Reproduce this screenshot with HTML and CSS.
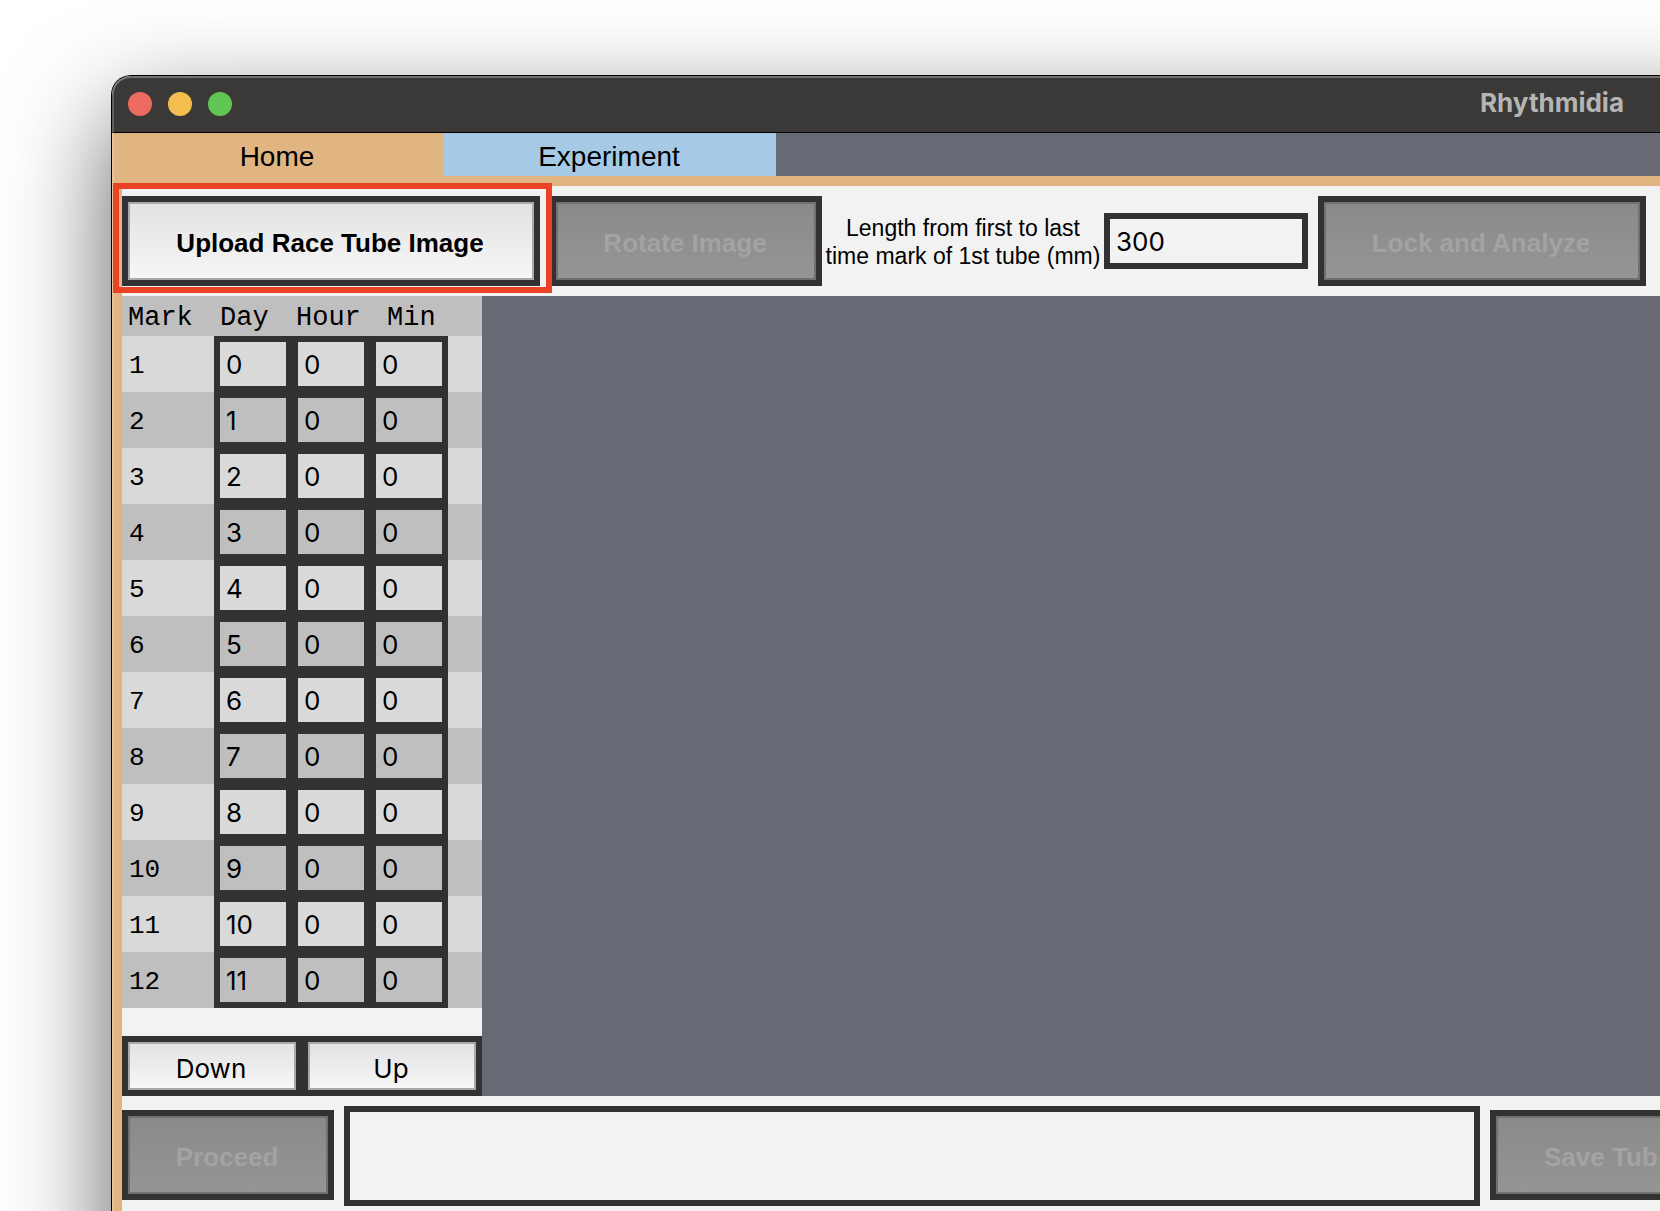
FILE: index.html
```html
<!DOCTYPE html>
<html lang="en">
<head>
<meta charset="utf-8">
<title>Rhythmidia</title>
<link rel="stylesheet" href="styles.css">
</head>
<body>
<div class="desktop">
  <div class="window">
    <header class="titlebar">
      <div class="lights">
        <span class="light light-close"></span>
        <span class="light light-minimize"></span>
        <span class="light light-zoom"></span>
      </div>
      <h1 class="title">Rhythmidia</h1>
    </header>
    <nav class="tabs">
      <button class="tab tab-active" type="button">Home</button>
      <button class="tab" type="button">Experiment</button>
    </nav>
    <main class="page">
      <section class="toolbar">
        <div class="callout"><button class="btn btn-upload" type="button">Upload Race Tube Image</button></div>
        <button class="btn btn-rotate" type="button" disabled>Rotate Image</button>
        <label class="length-label" for="length">Length from first to last<br>time mark of 1st tube (mm)</label>
        <input class="field length-field" id="length" type="text" value="300">
        <button class="btn btn-lock" type="button" disabled>Lock and Analyze</button>
      </section>
      <section class="workspace">
        <div class="side">
          <table class="marks">
            <thead>
              <tr><th class="col-mark">Mark</th><th class="col-time">Day</th><th class="col-time col-hour">Hour</th><th class="col-time col-min">Min</th><th></th></tr>
            </thead>
            <tbody>
              <tr><td>1</td><td><input class="field" aria-label="Mark 1 day" value="0"></td><td><input class="field" aria-label="Mark 1 hour" value="0"></td><td><input class="field" aria-label="Mark 1 minute" value="0"></td><td></td></tr>
              <tr><td>2</td><td><input class="field" aria-label="Mark 2 day" value="1"></td><td><input class="field" aria-label="Mark 2 hour" value="0"></td><td><input class="field" aria-label="Mark 2 minute" value="0"></td><td></td></tr>
              <tr><td>3</td><td><input class="field" aria-label="Mark 3 day" value="2"></td><td><input class="field" aria-label="Mark 3 hour" value="0"></td><td><input class="field" aria-label="Mark 3 minute" value="0"></td><td></td></tr>
              <tr><td>4</td><td><input class="field" aria-label="Mark 4 day" value="3"></td><td><input class="field" aria-label="Mark 4 hour" value="0"></td><td><input class="field" aria-label="Mark 4 minute" value="0"></td><td></td></tr>
              <tr><td>5</td><td><input class="field" aria-label="Mark 5 day" value="4"></td><td><input class="field" aria-label="Mark 5 hour" value="0"></td><td><input class="field" aria-label="Mark 5 minute" value="0"></td><td></td></tr>
              <tr><td>6</td><td><input class="field" aria-label="Mark 6 day" value="5"></td><td><input class="field" aria-label="Mark 6 hour" value="0"></td><td><input class="field" aria-label="Mark 6 minute" value="0"></td><td></td></tr>
              <tr><td>7</td><td><input class="field" aria-label="Mark 7 day" value="6"></td><td><input class="field" aria-label="Mark 7 hour" value="0"></td><td><input class="field" aria-label="Mark 7 minute" value="0"></td><td></td></tr>
              <tr><td>8</td><td><input class="field" aria-label="Mark 8 day" value="7"></td><td><input class="field" aria-label="Mark 8 hour" value="0"></td><td><input class="field" aria-label="Mark 8 minute" value="0"></td><td></td></tr>
              <tr><td>9</td><td><input class="field" aria-label="Mark 9 day" value="8"></td><td><input class="field" aria-label="Mark 9 hour" value="0"></td><td><input class="field" aria-label="Mark 9 minute" value="0"></td><td></td></tr>
              <tr><td>10</td><td><input class="field" aria-label="Mark 10 day" value="9"></td><td><input class="field" aria-label="Mark 10 hour" value="0"></td><td><input class="field" aria-label="Mark 10 minute" value="0"></td><td></td></tr>
              <tr><td>11</td><td><input class="field" aria-label="Mark 11 day" value="10"></td><td><input class="field" aria-label="Mark 11 hour" value="0"></td><td><input class="field" aria-label="Mark 11 minute" value="0"></td><td></td></tr>
              <tr><td>12</td><td><input class="field" aria-label="Mark 12 day" value="11"></td><td><input class="field" aria-label="Mark 12 hour" value="0"></td><td><input class="field" aria-label="Mark 12 minute" value="0"></td><td></td></tr>
            </tbody>
          </table>
          <div class="pager">
            <button class="btn btn-page" type="button">Down</button>
            <button class="btn btn-page" type="button">Up</button>
          </div>
        </div>
        <div class="plot"></div>
      </section>
      <footer class="bottombar">
        <button class="btn btn-proceed" type="button" disabled>Proceed</button>
        <textarea class="field console" aria-label="Messages" readonly></textarea>
        <button class="btn btn-save" type="button" disabled>Save Tub</button>
      </footer>
    </main>
  </div>
</div>
</body>
</html>
```
FILE: styles.css
```css
:root {
  --dark: #323232;
  --panel: #f2f2f2;
  --slate: #676975;
  --orange: #e0b582;
  --sans: "Liberation Sans", Arial, sans-serif;
  --ui: Inter, sans-serif;
  --mono: "Liberation Mono", "Courier New", monospace;
}

* { box-sizing: border-box; }

body { margin: 0; background: #fff; }

.desktop {
  display: flex;
  min-height: 100vh;
  padding: 75px 0 0 111px;
  overflow: hidden;
}

.window {
  position: relative;
  isolation: isolate;
  display: flex;
  flex: 1;
  flex-direction: column;
  min-width: 0;
  border: solid #000;
  border-width: 1px 0 0 1px;
  border-radius: 20px 0 0 0;
}

/* The window and its shadow run on past the right and bottom edges. */
.window::before {
  content: "";
  position: absolute;
  inset: 0 -240px -240px 0;
  z-index: -1;
  border-radius: 20px;
  box-shadow: 0 40px 104px rgba(0, 0, 0, 0.64);
}

/* Light rim along the window's edge */
.window::after {
  content: "";
  position: absolute;
  inset: 0;
  border: solid rgba(255, 255, 255, 0.2);
  border-width: 0 0 0 2px;
  border-radius: 19px 0 0 0;
  pointer-events: none;
}

.titlebar {
  display: flex;
  align-items: center;
  justify-content: space-between;
  height: 57px;
  padding: 0 36px 0 16px;
  background: #3a3937;
  border-bottom: 1px solid #000;
  border-radius: 19px 0 0 0;
  box-shadow: inset 0 2px #73746e;
}

.lights { display: flex; gap: 16px; }
.light { width: 24px; height: 24px; border-radius: 50%; }
.light-close { background: #ed6a5e; }
.light-minimize { background: #f5bf4f; }
.light-zoom { background: #61c554; }

.title {
  margin: 0;
  padding-bottom: 2px;
  color: #b5b5b3;
  font: 700 26px/32px var(--ui);
}

.tabs { display: flex; background: var(--slate); }

.tab {
  width: 332px;
  height: 43px;
  padding: 4px 2px 0 0;
  border: 0;
  background: #a6cae6;
  color: #000;
  font: 28px/32px var(--sans);
}

.tab-active { background: var(--orange); }

.page {
  display: flex;
  flex: 1;
  flex-direction: column;
  border: solid var(--orange);
  border-width: 10px 0 0 10px;
  background: var(--panel);
}

.toolbar {
  display: flex;
  align-items: center;
  padding: 10px 14px 10px 0;
}

.btn {
  flex: none;
  height: 90px;
  padding: 4px 2px 0 0;
  border: 6px solid var(--dark);
  background: linear-gradient(#e2e2e2, #f7f7f7);
  box-shadow: inset 0 0 0 2px #a9a9a9;
  color: #000;
  font: 700 26px/32px var(--sans);
  white-space: nowrap;
}

.btn:disabled {
  background: linear-gradient(#8a8a8a, #959595);
  box-shadow: inset 0 0 0 2px #707070;
  color: #a3a3a3;
}

.callout { position: relative; margin-right: 10px; }

/* Red frame that points out the button */
.callout::after {
  content: "";
  position: absolute;
  inset: -13px -12px -7px -9px;
  z-index: 1;
  border: 6px solid #eb4226;
  pointer-events: none;
}

.btn-upload { display: block; width: 418px; }
.btn-rotate { width: 272px; }
.btn-lock { width: 328px; margin-left: 10px; }
.btn-proceed { width: 212px; }

/* Its right edge lies beyond the visible part of the window. */
.btn-save {
  width: 180px;
  margin-right: -10px;
  padding-left: 48px;
  text-align: left;
}

.length-label {
  flex: none;
  width: 282px;
  padding-top: 2px;
  font: 23px/28px var(--sans);
  text-align: center;
  white-space: nowrap;
}

.field {
  display: block;
  width: 100%;
  height: 56px;
  padding: 0 6px;
  border: 6px solid var(--dark);
  border-radius: 0;
  outline: 0;
  background: transparent;
  color: #000;
  font: 26px/32px var(--ui);
}

.length-field { flex: 1; min-width: 0; }

.workspace { display: flex; }

.side {
  display: flex;
  flex: none;
  flex-direction: column;
  gap: 28px;
  width: 360px;
}

.marks {
  width: 100%;
  border-collapse: collapse;
  table-layout: fixed;
  font: 26px/32px var(--mono);
}

.marks th {
  height: 40px;
  padding: 4px 0 0 6px;
  background: #bfbfbf;
  font-size: 27px;
  font-weight: 400;
  text-align: left;
}

.marks .col-mark { width: 92px; }
.marks .col-time { width: 78px; }
.marks .col-hour { padding-left: 4px; }
.marks .col-min { padding-left: 17px; }

.marks td { height: 56px; padding: 0; }
.marks td:first-child { padding: 4px 0 0 7px; }
.marks tbody tr:nth-child(odd) { background: #d9d9d9; }
.marks tbody tr:nth-child(even) { background: #bfbfbf; }

.pager { display: flex; }

.btn-page {
  flex: 1;
  height: 60px;
  padding-top: 6px;
  font: 26px/32px var(--ui);
}

.plot { flex: 1; background: var(--slate); }

.bottombar {
  display: flex;
  align-items: flex-start;
  gap: 10px;
  padding: 10px 0 5px;
}

.bottombar .btn { margin-top: 4px; }

.console { flex: 1; min-width: 0; height: 100px; resize: none; }
```
